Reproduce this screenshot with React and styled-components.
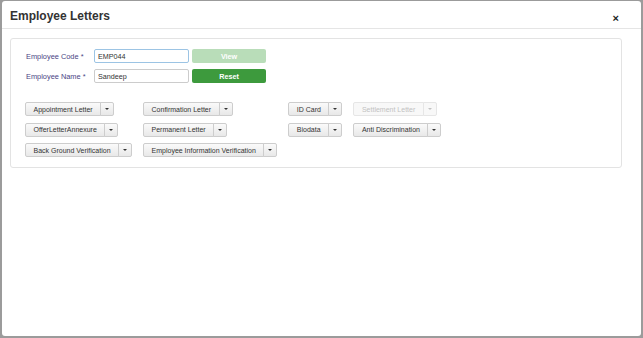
import React from 'react'
import styled, {createGlobalStyle} from 'styled-components'

const GlobalStyle = createGlobalStyle`
  html, body {
    margin: 0;
    padding: 0;
    height: 100%;
    background: #9b9b9b;
    font-family: "Liberation Sans", Arial, sans-serif;
  }
`

const Modal = styled.div`
  box-sizing: border-box;
  margin: 1px 2px 0 2px;
  height: 335px;
  background: #fff;
  border-radius: 3px;
  display: flex;
  flex-direction: column;
`

const Header = styled.div`
  display: flex;
  align-items: center;
  justify-content: space-between;
  height: 27px;
  padding: 0 22px 0 8px;
  border-bottom: 1px solid #e5e5e5;
`

const Title = styled.h4`
  margin: 0;
  font-size: 12px;
  font-weight: bold;
  color: #333;
  padding-top: 2px;
`

const Close = styled.span`
  font-size: 11px;
  font-weight: bold;
  color: #222;
  padding-top: 6px;
`

const Body = styled.div`
  padding: 9px 19px 0 8px;
`

const Panel = styled.div`
  border: 1px solid #e3e3e3;
  border-radius: 3px;
  padding: 10px 14px 10px 14px;
`

const FormRow = styled.div`
  display: flex;
  align-items: center;
  margin-bottom: ${p => p.$last ? '19px' : '6px'};
`

const Label = styled.label`
  width: 68px;
  padding-left: 1px;
  font-size: 7.4px;
  color: #4a4584;
`

const Input = styled.input`
  box-sizing: border-box;
  width: 95px;
  height: 14px;
  padding: 0 3px;
  font-family: "Liberation Sans", Arial, sans-serif;
  font-size: 7.2px;
  color: #333;
  border: 1px solid ${p => p.$focus ? '#9cc4e4' : '#ccc'};
  border-radius: 2px;
  outline: none;
`

const ActionButton = styled.button`
  box-sizing: border-box;
  margin-left: 3px;
  width: 74px;
  height: 14px;
  padding: 0;
  border: none;
  border-radius: 2px;
  font-family: "Liberation Sans", Arial, sans-serif;
  font-size: 7.2px;
  font-weight: bold;
  color: #fff;
  background: ${p => p.$disabled ? '#b9ddb9' : '#3d9a3d'};
`

const LetterGrid = styled.div`
  display: grid;
  grid-template-columns: repeat(4, max-content);
  column-gap: 11px;
  row-gap: 6.5px;
`

const Group = styled.div`
  display: flex;
  height: 14px;
`

const Segment = styled.button`
  box-sizing: border-box;
  height: 14px;
  padding: ${p => p.$caret ? '0' : '0 7.5px'};
  width: ${p => p.$caret ? '14px' : 'auto'};
  margin-left: ${p => p.$caret ? '-1px' : '0'};
  border: 1px solid ${p => p.$disabled ? '#e6e6e6' : '#cdcdcd'};
  border-radius: ${p => p.$caret ? '0 2px 2px 0' : '2px 0 0 2px'};
  background: ${p => p.$disabled
    ? '#f8f8f8'
    : 'linear-gradient(#fafafa, #e8e8e8)'};
  font-family: "Liberation Sans", Arial, sans-serif;
  font-size: 7px;
  color: ${p => p.$disabled ? '#c2c2c2' : '#333'};
  white-space: nowrap;
  display: flex;
  align-items: center;
  justify-content: center;
`

const Caret = styled.span`
  width: 0;
  height: 0;
  border-left: 2px solid transparent;
  border-right: 2px solid transparent;
  border-top: 2px solid ${p => p.$disabled ? '#c2c2c2' : '#333'};
`

const letters = [
  {name: 'Appointment Letter'},
  {name: 'Confirmation Letter'},
  {name: 'ID Card'},
  {name: 'Settlement Letter', disabled: true},
  {name: 'OfferLetterAnnexure'},
  {name: 'Permanent Letter'},
  {name: 'Biodata'},
  {name: 'Anti Discrimination'},
  {name: 'Back Ground Verification'},
  {name: 'Employee Information Verification'},
]

const App = () => {
  return (
    <>
      <GlobalStyle />
      <Modal>
        <Header>
          <Title>Employee Letters</Title>
          <Close>×</Close>
        </Header>
        <Body>
          <Panel>
            <FormRow>
              <Label>Employee Code *</Label>
              <Input $focus defaultValue="EMP044" />
              <ActionButton $disabled>View</ActionButton>
            </FormRow>
            <FormRow $last>
              <Label>Employee Name *</Label>
              <Input defaultValue="Sandeep" />
              <ActionButton>Reset</ActionButton>
            </FormRow>
            <LetterGrid>
              {letters.map((l, i) => (
                <Group key={i}>
                  <Segment $disabled={l.disabled}>{l.name}</Segment>
                  <Segment $caret $disabled={l.disabled}>
                    <Caret $disabled={l.disabled} />
                  </Segment>
                </Group>
              ))}
            </LetterGrid>
          </Panel>
        </Body>
      </Modal>
    </>
  )
}

export default App
